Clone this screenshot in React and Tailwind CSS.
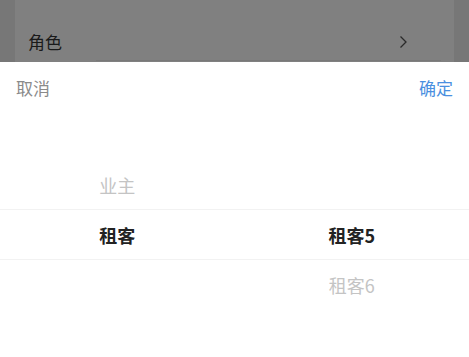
import React from 'react'

const COLUMNS = [
  { items: ['业主', '租客'], selected: 1 },
  { items: ['租客5', '租客6'], selected: 0 },
]

const ROW_H = 50
const VISIBLE = 5

function PickerColumn({ items, selected }) {
  const offset = (Math.floor(VISIBLE / 2) - selected) * ROW_H
  return (
    <div className="flex-1 overflow-hidden" style={{ height: ROW_H * VISIBLE }}>
      <div className="flex flex-col" style={{ transform: `translateY(${offset}px)` }}>
        {items.map((item, i) => (
          <div
            key={item}
            className={`h-[50px] flex items-center justify-center text-[18px] ${
              i === selected ? 'font-bold text-[#222]' : 'text-[#c4c4c4]'
            }`}
          >
            {item}
          </div>
        ))}
      </div>
    </div>
  )
}

export default function App() {
  return (
    <div
      className="w-[469px] h-[357px] overflow-hidden flex flex-col bg-white"
      style={{ fontFamily: '"Noto Sans CJK SC", "Noto Sans", sans-serif' }}
    >
      {/* dimmed page behind the sheet */}
      <div className="h-[62px] bg-[#777] px-[15px] shrink-0">
        <div className="h-full bg-[#808080] flex flex-col">
          <div className="flex-1 flex items-end justify-between pl-[13px] pr-[46px] pb-[6px]">
            <span className="text-[17px] leading-[24px] text-[#1a1a1a]">角色</span>
            <svg width="9" height="14" viewBox="0 0 9 14" fill="none" className="mb-[5px]">
              <path d="M1.5 1.5 7 7 1.5 12.5" stroke="#2a2a2a" strokeWidth="1.3" />
            </svg>
          </div>
          <div className="h-px ml-[81px] mr-[13px] bg-[#787878] mb-px shrink-0" />
        </div>
      </div>

      {/* action sheet */}
      <div className="flex items-center justify-between h-[52px] px-[16px] shrink-0">
        <span className="text-[17px] text-[#8a8a8a]">取消</span>
        <span className="text-[17px] text-[#4a8fe0]">确定</span>
      </div>

      <div className="relative flex shrink-0 -mt-[4px]">
        {COLUMNS.map((col, i) => (
          <PickerColumn key={i} items={col.items} selected={col.selected} />
        ))}
        <div className="absolute left-0 right-0 top-[99px] h-[51px] border-y border-[#f2f2f2] pointer-events-none" />
      </div>
    </div>
  )
}
